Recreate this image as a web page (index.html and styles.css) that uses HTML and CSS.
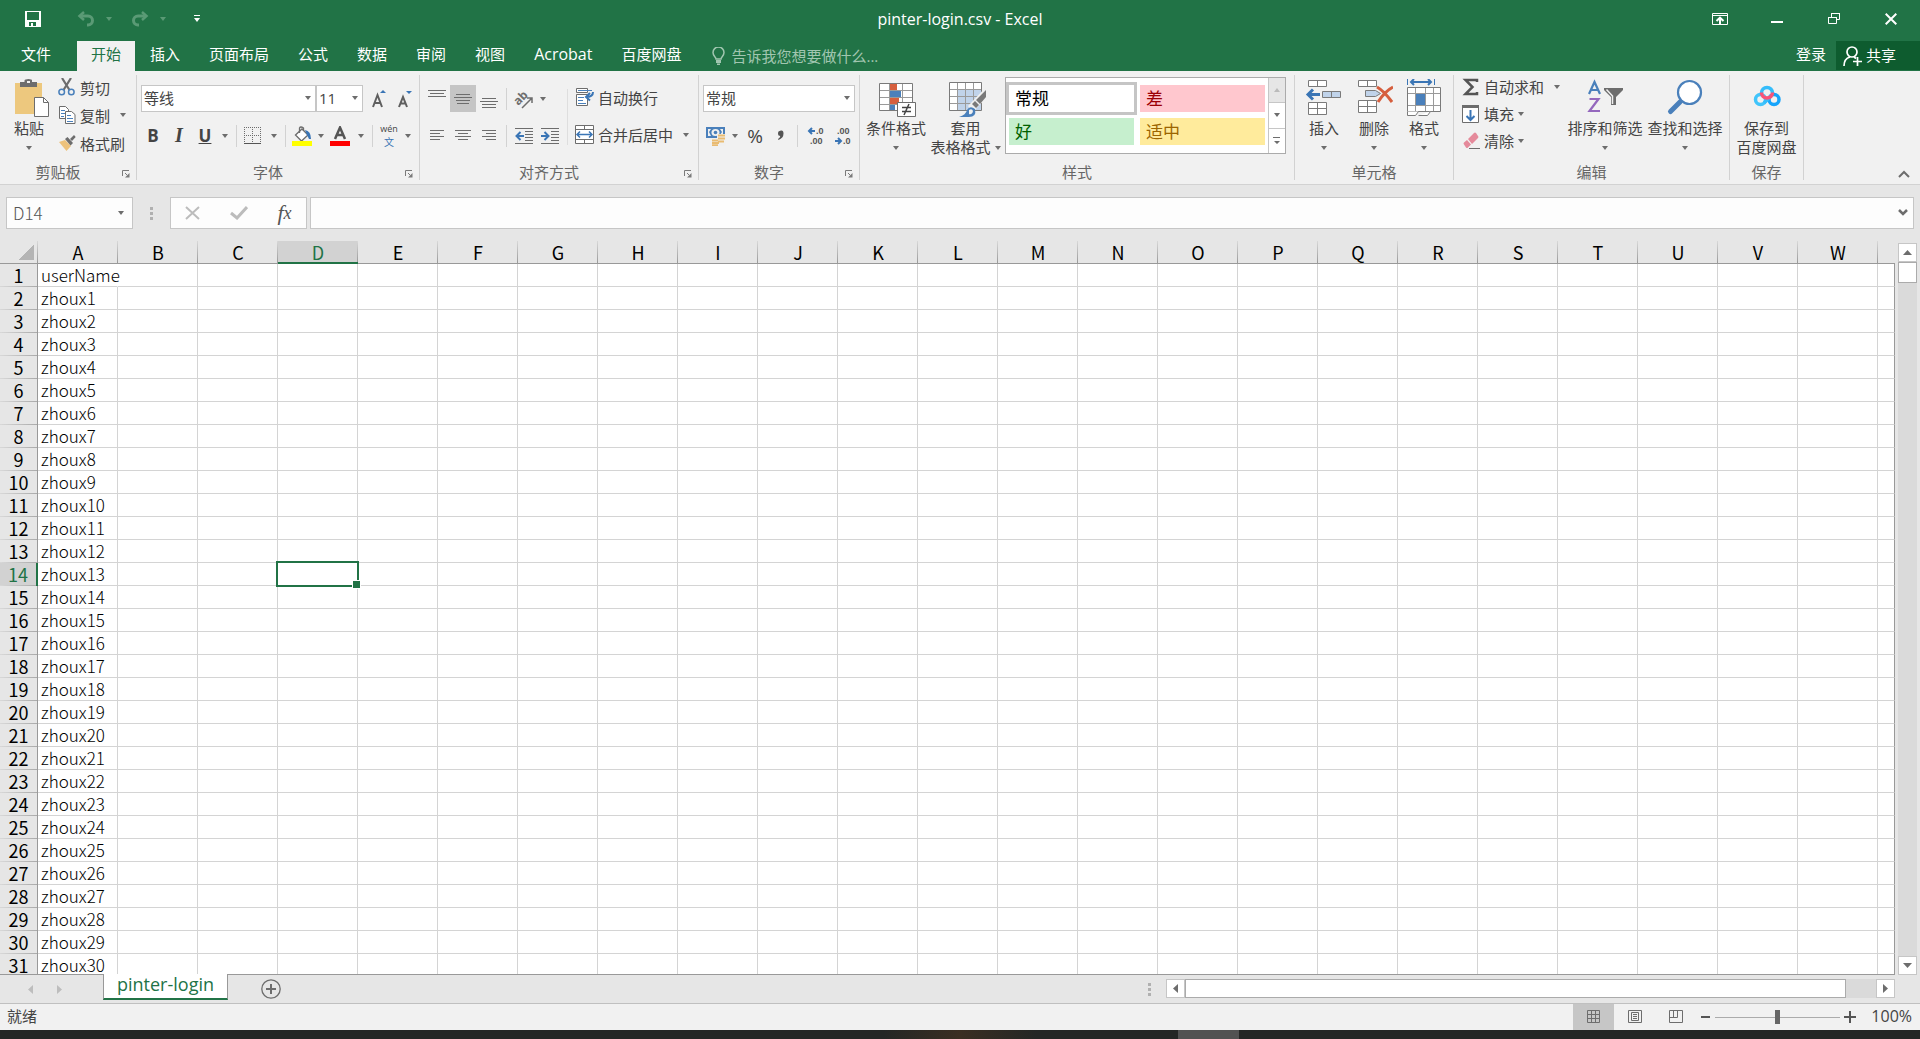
FILE: index.html
```html
<!DOCTYPE html>
<html lang="zh-CN">
<head>
    <meta charset="UTF-8">
    <meta name="viewport" content="width=device-width, initial-scale=1.0">
    <title>pinter-login.csv - Excel</title>
    <link rel="stylesheet" href="styles.css">
</head>
<body>
    <header class="titlebar">
        <div class="quick-access">
            <button class="qa-save" aria-label="保存">
                <svg width="16" height="16" viewBox="0 0 16 16"><path fill="#fff" fill-rule="evenodd" d="M0 0h16v16H0zM2 1v8h12V1zM4 11v4h2v-3h2v3h3v-4z"/></svg>
            </button>
            <button class="qa-step" aria-label="撤消">
                <svg width="18" height="16" viewBox="0 0 18 16"><path fill="none" stroke="#5a9a75" stroke-width="3" d="M3 5h8a4.500 4.500 0 0 1 0 9h-1"/><path fill="none" stroke="#5a9a75" stroke-width="2.500" d="M7 1 2.500 5 7 9"/></svg>
                <span class="caret"></span>
            </button>
            <button class="qa-step" aria-label="恢复">
                <svg width="18" height="16" viewBox="0 0 18 16"><path fill="none" stroke="#5a9a75" stroke-width="3" d="M15 5H7a4.500 4.500 0 0 0 0 9h1"/><path fill="none" stroke="#5a9a75" stroke-width="2.500" d="M11 1l4.500 4L11 9"/></svg>
                <span class="caret"></span>
            </button>
            <button class="qa-more" aria-label="自定义快速访问工具栏">
                <svg width="6" height="8" viewBox="0 0 6 8"><path fill="#fff" d="M0 0h6v1H0zM0 3h6L3 7z"/></svg>
            </button>
        </div>
        <h1 class="doc-title">pinter-login.csv - Excel</h1>
        <div class="window-controls">
            <button aria-label="功能区显示选项">
                <svg width="16" height="12" viewBox="0 0 16 12"><path fill="none" stroke="#fff" d="M.5.500h15v11H.5zM0 2.500h16"/><path fill="none" stroke="#fff" stroke-width="2" d="M8 11V5M4.500 8 8 4.700 11.500 8"/></svg>
            </button>
            <button aria-label="最小化">
                <svg width="12" height="12" viewBox="0 0 12 12"><path fill="#fff" d="M0 8h12v2H0z"/></svg>
            </button>
            <button aria-label="向下还原">
                <svg width="12" height="14" viewBox="0 0 12 14"><path fill="none" stroke="#fff" d="M.5 5.500h8v6h-8zM3.500 5V1.500h8v6H9"/><path fill="#fff" d="M0 5h9v1H0zM3 1h9v1H3z"/></svg>
            </button>
            <button aria-label="关闭">
                <svg width="12" height="12" viewBox="0 0 12 12"><path stroke="#fff" stroke-width="2" d="M.7.700l10.600 10.600M11.300.700.700 11.300"/></svg>
            </button>
        </div>
    </header>

    <nav class="tabs">
        <a href="#file" class="file">文件</a>
        <a href="#home" class="active">开始</a>
        <a href="#insert">插入</a>
        <a href="#layout">页面布局</a>
        <a href="#formulas">公式</a>
        <a href="#data">数据</a>
        <a href="#review">审阅</a>
        <a href="#view">视图</a>
        <a href="#acrobat" class="latin">Acrobat</a>
        <a href="#netdisk">百度网盘</a>
        <label class="tell-me">
            <svg width="13" height="18" viewBox="0 0 13 18"><path fill="none" stroke="#a1c6b0" stroke-width="1.500" d="M4 12c0-2-3-3-3-6.500a5.400 5.400 0 0 1 11 0C12 9 9 10 9 12z"/><path fill="#a1c6b0" d="M4 13h5v3H4zM5 16.500h3V18H5z"/></svg>
            <input type="text" placeholder="告诉我您想要做什么...">
        </label>
        <a href="#signin" class="signin">登录</a>
        <button class="share">
            <svg width="19" height="20" viewBox="0 0 19 20"><g fill="none" stroke="#fff" stroke-width="1.700"><circle cx="9" cy="6" r="5"/><path d="M1 20c0-5 2.500-8 6-9M11 11l2 1.500M14.500 11v9M10 15.500h9"/></g></svg>
            共享
        </button>
    </nav>

    <section class="ribbon">
        <div class="group clipboard">
            <div class="group-body">
                <button class="big paste">
                    <svg width="40" height="40" viewBox="0 0 40 40"><path fill="#edc87e" d="M6 4h27v31H6z"/><path fill="#6d6d6d" d="M11 3h4.500V1.500Q16 0 19.500 0T23 1.500V3h5v5H11z"/><path fill="#f0f0f0" d="M18 2h3v2h-3z"/><path fill="#fff" stroke="#6d6d6d" d="M25.500 18.500h9l5 5v14h-14z"/><path fill="none" stroke="#6d6d6d" d="M34.500 18.500v5h5"/></svg>
                    粘贴
                    <span class="caret"></span>
                </button>
                <div class="stack clip-stack">
                    <button class="small">
                        <svg width="18" height="18" viewBox="0 0 18 18"><path fill="none" stroke="#6d6d6d" stroke-width="2.200" d="M4 0l7.500 12M13 0 5.500 12"/><g fill="none" stroke="#4a80bb" stroke-width="1.500"><circle cx="3.700" cy="14" r="2.800"/><circle cx="13.300" cy="14" r="2.800"/></g></svg>
                        剪切
                    </button>
                    <button class="small">
                        <svg width="18" height="18" viewBox="0 0 18 18"><path fill="#fff" stroke="#6d6d6d" d="M1.500.500h6l3 3v9h-9z"/><path stroke="#4a80bb" d="M3 4.500h4M3 7.500h4M3 10.500h3"/><path fill="#fff" stroke="#6d6d6d" d="M7.500 5.500h6l3.500 3v9H7.500z"/><path stroke="#4a80bb" d="M9 9.500h4M9 12.500h6M9 15.500h6"/></svg>
                        复制
                        <span class="caret far"></span>
                    </button>
                    <button class="small">
                        <svg width="18" height="18" viewBox="0 0 18 18"><path fill="#edc27c" d="M1 8l6-2 6 6-4.500 5z"/><path fill="#6d6d6d" d="M7 5l2.500-2L15 9l-2.500 2.500zM12 5l4-4 1.700 2-3.700 4z"/></svg>
                        格式刷
                    </button>
                </div>
            </div>
            <div class="group-foot"><span>剪贴板</span><button class="launcher" aria-label="剪贴板选项"><svg width="8" height="8" viewBox="0 0 8 8"><path fill="none" stroke="#7a7a7a" d="M.5 6V.500H7M3 3l2.500 2.500"/><path fill="#7a7a7a" d="M7.500 3v4.500H3z"/></svg></button></div>
        </div>

        <div class="group font">
            <div class="group-body rows">
                <div class="row">
                    <span class="combo font-name"><select aria-label="字体"><option>等线</option></select></span>
                    <span class="combo font-size"><select aria-label="字号"><option>11</option></select></span>
                    <button class="tool grow" aria-label="增大字号"><svg width="18" height="18" viewBox="0 0 18 18"><path fill="none" stroke="#5f5f5f" stroke-width="2" d="M2 17 6.500 5 11 17M3.500 13h6"/><path fill="#3a75b5" d="M9 3h6l-3-3z"/></svg></button>
                    <button class="tool" aria-label="减小字号"><svg width="18" height="18" viewBox="0 0 18 18"><path fill="none" stroke="#5f5f5f" stroke-width="2" d="M2 17 6 7l4 10M3.500 13.500h5"/><path fill="#3a75b5" d="M9 1h6l-3 3z"/></svg></button>
                </div>
                <div class="row">
                    <button class="tool narrow bold">B</button>
                    <button class="tool wide italic">I</button>
                    <button class="tool narrow underline">U</button>
                    <button class="drop wide-drop" aria-label="下划线选项"><span class="caret"></span></button>
                    <span class="sep"></span>
                    <button class="tool" aria-label="边框"><svg width="18" height="18" viewBox="0 0 18 18"><path fill="none" stroke="#6d6d6d" stroke-dasharray="1 1" d="M0 .5h17M.5 0v16M8.500 0v16M16.500 0v16M0 8.500h17"/><path stroke="#555" d="M0 16.500h17"/></svg></button>
                    <button class="drop wide-drop" aria-label="边框选项"><span class="caret"></span></button>
                    <span class="sep"></span>
                    <button class="tool" aria-label="填充颜色"><svg width="20" height="20" viewBox="0 0 20 20"><path fill="#fff" stroke="#6d6d6d" stroke-width="1.300" d="M3.500 9 10 3l6 6-6.500 6z"/><path fill="none" stroke="#6d6d6d" stroke-width="1.300" d="M7.500 7V2q1-2 4 0v3"/><path fill="#3a75b5" d="M13 4q6 1 6 9h-2l-2-4z"/><path fill="#ff0" d="M0 15h20v5H0z"/></svg></button>
                    <button class="drop" aria-label="填充颜色选项"><span class="caret"></span></button>
                    <button class="tool" aria-label="字体颜色"><svg width="20" height="20" viewBox="0 0 20 20"><path fill="none" stroke="#555" stroke-width="2.500" d="M5 13 10 1.500 15 13M6.500 9h7"/><path fill="red" d="M0 15h20v5H0z"/></svg></button>
                    <button class="drop wide-drop" aria-label="字体颜色选项"><span class="caret"></span></button>
                    <span class="sep"></span>
                    <button class="tool pinyin" aria-label="拼音"><span>wén</span><span class="hanzi">文</span></button>
                    <button class="drop" aria-label="拼音选项"><span class="caret"></span></button>
                </div>
            </div>
            <div class="group-foot"><span>字体</span><button class="launcher" aria-label="字体设置"><svg width="8" height="8" viewBox="0 0 8 8"><path fill="none" stroke="#7a7a7a" d="M.5 6V.500H7M3 3l2.500 2.500"/><path fill="#7a7a7a" d="M7.500 3v4.500H3z"/></svg></button></div>
        </div>

        <div class="group align">
            <div class="group-body">
                <div class="rows">
                    <div class="row">
                        <button class="tool" aria-label="顶端对齐"><svg width="18" height="20" viewBox="0 0 18 20"><path stroke="#6d6d6d" d="M0 1.500h18M2 4.500h14M0 7.500h18"/></svg></button>
                        <button class="tool on" aria-label="垂直居中"><svg width="18" height="20" viewBox="0 0 18 20"><path stroke="#6d6d6d" d="M2 5.500h14M0 8.500h18M2 11.500h14M0 8.500h18M3 14.500h12"/></svg></button>
                        <button class="tool" aria-label="底端对齐"><svg width="18" height="20" viewBox="0 0 18 20"><path stroke="#6d6d6d" d="M2 9.500h14M0 12.500h18M2 15.500h14M2 18.500h14"/></svg></button>
                        <span class="sep four"></span>
                        <button class="tool" aria-label="方向"><svg width="24" height="24" viewBox="0 0 24 24"><text class="icon-ab" x="2" y="15" transform="rotate(-45 9 12)">ab</text><path fill="none" stroke="#6d6d6d" stroke-width="1.500" d="M10 21 20 11M15 11h5v5"/></svg></button>
                        <button class="drop" aria-label="方向选项"><span class="caret"></span></button>
                    </div>
                    <div class="row">
                        <button class="tool" aria-label="左对齐"><svg width="18" height="12" viewBox="0 0 18 12"><path stroke="#6d6d6d" d="M2 .5h14M2 3.500h10M2 6.500h14M2 9.500h10"/></svg></button>
                        <button class="tool" aria-label="居中"><svg width="18" height="12" viewBox="0 0 18 12"><path stroke="#6d6d6d" d="M1 .5h16M4 3.500h10M1 6.500h16M4 9.500h10"/></svg></button>
                        <button class="tool" aria-label="右对齐"><svg width="18" height="12" viewBox="0 0 18 12"><path stroke="#6d6d6d" d="M2 .5h14M6 3.500h10M2 6.500h14M6 9.500h10"/></svg></button>
                        <span class="sep four"></span>
                        <button class="tool" aria-label="减少缩进量"><svg width="18" height="16" viewBox="0 0 18 16"><path stroke="#6d6d6d" d="M0 .5h18M10 3.500h8M10 6.500h8M10 9.500h8M10 12.500h8M0 15.500h18"/><path fill="none" stroke="#3a75b5" stroke-width="2" d="M9 8H2M5.500 4 1.500 8l4 4"/></svg></button>
                        <button class="tool" aria-label="增加缩进量"><svg width="18" height="16" viewBox="0 0 18 16"><path stroke="#6d6d6d" d="M0 .5h18M10 3.500h8M10 6.500h8M10 9.500h8M10 12.500h8M0 15.500h18"/><path fill="none" stroke="#3a75b5" stroke-width="2" d="M0 8h7M3.500 4l4 4-4 4"/></svg></button>
                    </div>
                </div>
                <span class="sep four tall"></span>
                <div class="rows">
                    <button class="small">
                        <svg width="20" height="19" viewBox="0 0 20 19"><path fill="#fff" stroke="#6d6d6d" d="M2.500.500h11v4h-11zM2.500 6.500h11v11h-11z"/><path fill="none" stroke="#4a80bb" d="M4 2.500h14M4 9.500h6M4 12.500h5M4 15.500h8"/><path fill="none" stroke="#3a75b5" stroke-width="2" d="M19 4q0 5-7 5M16 5l-4 4 4 3.500"/></svg>
                        自动换行
                    </button>
                    <button class="small">
                        <svg width="20" height="19" viewBox="0 0 20 19"><path fill="#fff" stroke="#6d6d6d" d="M1.500.500h18v18h-18zM1.500 4.500h18M1.500 14.500h18M10.500 0v5M10.500 14v5"/><path fill="none" stroke="#3a75b5" stroke-width="1.500" d="M3 9.500h15M6 6.500l-3 3 3 3M15 6.500l3 3-3 3"/></svg>
                        合并后居中
                        <span class="caret far"></span>
                    </button>
                </div>
            </div>
            <div class="group-foot"><span>对齐方式</span><button class="launcher" aria-label="对齐设置"><svg width="8" height="8" viewBox="0 0 8 8"><path fill="none" stroke="#7a7a7a" d="M.5 6V.500H7M3 3l2.500 2.500"/><path fill="#7a7a7a" d="M7.500 3v4.500H3z"/></svg></button></div>
        </div>

        <div class="group number">
            <div class="group-body rows">
                <div class="row">
                    <span class="combo number-format"><select aria-label="数字格式"><option>常规</option></select></span>
                </div>
                <div class="row">
                    <button class="tool" aria-label="会计数字格式"><svg width="20" height="20" viewBox="0 0 20 20"><path fill="#4a80bb" d="M0 1h19v11H0z"/><path fill="#f0f0f0" d="M2 3h3l-2 3 2 4H2zM17 3h-3l2 3-2 3h3z"/><ellipse cx="9.500" cy="6.500" rx="4" ry="3.500" fill="#f0f0f0"/><circle cx="9.500" cy="6.500" r="1.800" fill="#4a80bb"/><path fill="#f0f0f0" d="M11 8h9v12H11zM6 12h8v8H6z"/><g fill="none" stroke="#e9bb71" stroke-width="2"><path d="M12 9.500h7M12 12.500h7M12 15.500h6M6 14.500h6M6 17h7M6 19.300h6"/></g></svg></button>
                    <button class="drop" aria-label="会计格式选项"><span class="caret"></span></button>
                    <button class="tool wide percent">%</button>
                    <button class="tool narrow comma" aria-label="千位分隔样式"><svg width="8" height="12" viewBox="0 0 8 12"><path fill="#555" d="M1.500 1.500q5-2.500 5 2 0 4.500-5 6.500l-.5-1q2-1 2.300-3Q1 6 1 4 1 2 1.500 1.500z"/></svg></button>
                    <span class="sep four"></span>
                    <button class="tool wide" aria-label="增加小数位数"><svg width="22" height="26" viewBox="0 0 22 26"><text class="icon-dec" x="11" y="11">.0</text><text class="icon-dec" x="5" y="21">.00</text><path fill="none" stroke="#3a75b5" stroke-width="2" d="M10 8H4M7 5 4 8l3 3"/></svg></button>
                    <button class="tool" aria-label="减少小数位数"><svg width="22" height="26" viewBox="0 0 22 26"><text class="icon-dec" x="5" y="11">.00</text><text class="icon-dec" x="11" y="21">.0</text><path fill="none" stroke="#3a75b5" stroke-width="2" d="M3 18h6M6 15l3 3-3 3"/></svg></button>
                </div>
            </div>
            <div class="group-foot"><span>数字</span><button class="launcher" aria-label="数字格式设置"><svg width="8" height="8" viewBox="0 0 8 8"><path fill="none" stroke="#7a7a7a" d="M.5 6V.500H7M3 3l2.500 2.500"/><path fill="#7a7a7a" d="M7.500 3v4.500H3z"/></svg></button></div>
        </div>

        <div class="group styles">
            <div class="group-body">
                <button class="big cond">
                    <svg width="40" height="40" viewBox="0 0 40 40"><path fill="#fff" stroke="#7a7a7a" d="M3.500 4.500h33v27h-33z"/><path stroke="#9a9a9a" d="M4 11.500h32M4 18.500h32M4 25.500h32M13.500 5v26M26.500 5v26"/><path fill="#d65f3e" d="M14 5h7v6h-7zM14 19h9v6h-9z"/><path fill="#4a80bb" d="M14 12h11v6H14zM14 26h5v5h-5z"/><path fill="#fff" stroke="#6d6d6d" d="M21.500 23.500h18v14h-18z"/><path stroke="#444" stroke-width="1.500" d="M26 28.500h9M26 32.500h9M33 25l-5 11"/></svg>
                    条件格式
                    <span class="caret"></span>
                </button>
                <button class="big table-fmt">
                    <svg width="40" height="40" viewBox="0 0 40 40"><path fill="#fff" stroke="#7a7a7a" d="M3.500 3.500h32v28h-32z"/><path fill="#c0d3ea" d="M12 11h23v20H12z"/><path stroke="#9a9a9a" d="M4 10.500h31M4 17.500h31M4 24.500h31M11.500 4v27M19.500 4v27M27.500 4v27"/><path fill="#f0f0f0" d="M40 8 22 27l5 6 13-14z"/><path fill="#7a7a7a" d="M40 11v7l-6 7-4-4zM29 22l4 4-3 3-4-4z"/><path fill="#4a80bb" d="M13 38q7-2 8-7 3-5 8-1 2 9-8 8z"/><path fill="#f0f0f0" d="M23 31q3-2 4 1-1 4-4 3z"/></svg>
                    套用
                    <span class="line">表格格式 <span class="caret"></span></span>
                </button>
                <div class="gallery">
                    <div class="swatches">
                        <button class="swatch normal">常规</button>
                        <button class="swatch bad">差</button>
                        <button class="swatch good">好</button>
                        <button class="swatch neutral">适中</button>
                    </div>
                    <div class="gallery-scroll">
                        <button class="off" aria-label="上一行"><span class="caret up"></span></button>
                        <button aria-label="下一行"><span class="caret"></span></button>
                        <button aria-label="其他样式"><svg width="8" height="8" viewBox="0 0 8 8"><path fill="#6d6d6d" d="M0 0h7v1H0zM1 4h6L4 7z"/></svg></button>
                    </div>
                </div>
            </div>
            <div class="group-foot"><span>样式</span></div>
        </div>

        <div class="group cells">
            <div class="group-body">
                <button class="big">
                    <svg width="38" height="40" viewBox="0 0 38 40"><g fill="#fff" stroke="#7a7a7a"><path d="M3.500 1.500h18v6h-18zM12.500 1v7M3.500 23.500h18v12h-18zM3.500 29.500h18M12.500 23v13"/><path fill="#c0d3ea" d="M17.500 12.500h18v6h-18zM26.500 12v7"/></g><path fill="none" stroke="#3a75b5" stroke-width="3" d="M15 15.500H3M8 10.500l-5 5 5 5"/></svg>
                    插入
                    <span class="caret"></span>
                </button>
                <button class="big">
                    <svg width="38" height="40" viewBox="0 0 38 40"><g fill="#fff" stroke="#7a7a7a"><path d="M3.500 1.500h18v6h-18zM12.500 1v7M3.500 21.500h18v12h-18zM3.500 27.500h18M12.500 21v13"/><path fill="#c0d3ea" d="M10.500 11.500h10l5 3-5 3h-10z"/></g><path fill="none" stroke="#d65f3e" stroke-width="3" d="M22 8q7 4 15 15M38 8q-8 4-15 15"/></svg>
                    删除
                    <span class="caret"></span>
                </button>
                <button class="big">
                    <svg width="38" height="40" viewBox="0 0 38 40"><path fill="#fff" stroke="#7a7a7a" d="M2.500 8.500h33v24h-33z"/><path fill="none" stroke="#9a9a9a" d="M3 14.500h32M3 26.500h32M10.500 9v23M20.500 9v23M28.500 9v23"/><path fill="#4a80bb" d="M11 15h9v11h-9z"/><path fill="#fff" stroke="#7a7a7a" d="M2.500 32.500v4h8l3-4M13.500 36.500h9l3-4"/><path fill="none" stroke="#3a75b5" d="M2.500 0v6M29.500 0v6"/><path fill="none" stroke="#3a75b5" stroke-width="2" d="M6 3h20M9 0 6 3l3 3M23 0l3 3-3 3"/></svg>
                    格式
                    <span class="caret"></span>
                </button>
            </div>
            <div class="group-foot"><span>单元格</span></div>
        </div>

        <div class="group editing">
            <div class="group-body">
                <div class="stack edit-stack">
                    <button class="small">
                        <svg width="18" height="18" viewBox="0 0 18 18"><path fill="none" stroke="#555" stroke-width="2.500" d="M15 4V2H3.500l7 7-7 7H15v-2"/></svg>
                        自动求和
                        <span class="caret far"></span>
                    </button>
                    <button class="small">
                        <svg width="18" height="18" viewBox="0 0 18 18"><path fill="#fff" stroke="#6d6d6d" d="M.5.500h16v17H.5z"/><path fill="#6d6d6d" d="M0 0h17v3H0z"/><path fill="none" stroke="#3a75b5" stroke-width="2" d="M8.500 5v10M4.500 11l4 4 4-4"/></svg>
                        填充
                        <span class="caret"></span>
                    </button>
                    <button class="small">
                        <svg width="18" height="18" viewBox="0 0 18 18"><path fill="#e58a9b" d="M6 7l6-6q1-1 2 0l2 3q1 1 0 2l-6 6zM5 8l4 4.500-3 3q-1 1-2 0l-2-3q-1-1 0-2z"/><path stroke="#6d6d6d" d="M7 16.500h11"/></svg>
                        清除
                        <span class="caret"></span>
                    </button>
                </div>
                <button class="big broad">
                    <svg width="38" height="40" viewBox="0 0 38 40"><path fill="none" stroke="#4a80bb" stroke-width="2.200" d="M3 15 8.500 3 14 15M5 11h7"/><path fill="none" stroke="#9468bd" stroke-width="2.200" d="M3.500 20h9l-9 12H14"/><path fill="#6d6d6d" d="M18 9h19v2l-7 7v8h-5v-8l-7-7z"/><path fill="none" stroke="#f0f0f0" stroke-width="1.500" d="M20.500 10.500l6 6.500v8"/></svg>
                    排序和筛选
                    <span class="caret"></span>
                </button>
                <button class="big broad">
                    <svg width="38" height="40" viewBox="0 0 38 40"><circle cx="23.500" cy="13.500" r="11.500" fill="#fff" stroke="#4a80bb" stroke-width="2.200"/><path stroke="#4a80bb" stroke-width="5" stroke-linecap="round" d="M14 23 4.500 32.500"/></svg>
                    查找和选择
                    <span class="caret"></span>
                </button>
            </div>
            <div class="group-foot"><span>编辑</span></div>
        </div>

        <div class="group save">
            <div class="group-body">
                <button class="big">
                    <svg width="28" height="40" viewBox="0 0 28 40"><g fill="none" stroke-width="3.500"><circle cx="7.500" cy="20.500" r="5" stroke="#41c5fb"/><circle cx="21" cy="20.500" r="5" stroke="#16a4fb"/><path stroke="#35bdfb" d="M11 24l7-7M8.500 14a5.500 5.500 0 1 1 11 0"/><path stroke="#fb5377" d="M8.500 13.500a5.500 5.500 0 0 0 11 0"/></g></svg>
                    保存到
                    <span class="line">百度网盘</span>
                </button>
            </div>
            <div class="group-foot"><span>保存</span></div>
        </div>

        <button class="collapse" aria-label="折叠功能区"><svg width="12" height="8" viewBox="0 0 12 8"><path fill="none" stroke="#6d6d6d" stroke-width="2" d="M1 7l5-5 5 5"/></svg></button>
    </section>

    <section class="formula-bar">
        <label class="name-box"><input type="text" value="D14" aria-label="名称框"><span class="caret"></span></label>
        <span class="grip"></span>
        <div class="formula-buttons">
            <button aria-label="取消"><svg width="16" height="14" viewBox="0 0 16 14"><path stroke="#bcbcbc" stroke-width="2" d="M1 1l13 12M14 1 1 13"/></svg></button>
            <button aria-label="输入"><svg width="18" height="14" viewBox="0 0 18 14"><path fill="none" stroke="#bcbcbc" stroke-width="3" d="M1 7l6 5L17 1"/></svg></button>
            <button class="fx" aria-label="插入函数"><i>f</i><i class="x">x</i></button>
        </div>
        <label class="formula-input"><input type="text" aria-label="编辑栏"><svg width="10" height="8" viewBox="0 0 10 8"><path fill="none" stroke="#6d6d6d" stroke-width="2.500" d="M1 1l4 4 4-4"/></svg></label>
    </section>

    <main class="workspace">
        <div class="sheet">
            <table id="grid">
                <thead></thead>
                <tbody></tbody>
            </table>
        </div>
        <div class="vscroll">
            <button aria-label="向上滚动"><svg width="9" height="5" viewBox="0 0 9 5"><path fill="#6d6d6d" d="M0 5h9L4.500 0z"/></svg></button>
            <div class="track"><div class="thumb"></div></div>
            <button aria-label="向下滚动"><svg width="9" height="5" viewBox="0 0 9 5"><path fill="#6d6d6d" d="M0 0h9L4.500 5z"/></svg></button>
        </div>
    </main>

    <footer class="sheet-bar">
        <div class="sheet-nav">
            <button aria-label="上一个工作表"><svg width="5" height="9" viewBox="0 0 5 9"><path fill="#bdbdbd" d="M5 0v9L0 4.500z"/></svg></button>
            <button aria-label="下一个工作表"><svg width="5" height="9" viewBox="0 0 5 9"><path fill="#bdbdbd" d="M0 0v9l5-4.500z"/></svg></button>
        </div>
        <button class="sheet-tab">pinter-login</button>
        <button class="add-sheet" aria-label="新工作表"><svg width="20" height="20" viewBox="0 0 20 20"><circle cx="10" cy="10" r="9.200" fill="none" stroke="#6d6d6d" stroke-width="1.300"/><path stroke="#6d6d6d" stroke-width="2" d="M5 10h10M10 5v10"/></svg></button>
        <span class="grip"></span>
        <div class="hscroll">
            <button aria-label="向左滚动"><svg width="5" height="9" viewBox="0 0 5 9"><path fill="#6d6d6d" d="M5 0v9L0 4.500z"/></svg></button>
            <div class="track"><div class="thumb"></div></div>
            <button aria-label="向右滚动"><svg width="5" height="9" viewBox="0 0 5 9"><path fill="#6d6d6d" d="M0 0v9l5-4.500z"/></svg></button>
        </div>
    </footer>

    <div class="status-bar">
        <span class="ready">就绪</span>
        <button class="view on" aria-label="普通"><svg width="14" height="14" viewBox="0 0 14 14"><path fill="none" stroke="#6d6d6d" d="M.5.500h12v12H.5zM4.500 0v13M8.500 0v13M0 4.500h13M0 8.500h13"/></svg></button>
        <button class="view" aria-label="页面布局"><svg width="14" height="14" viewBox="0 0 14 14"><path fill="none" stroke="#6d6d6d" d="M.5.500h13v12H.5zM3.500 2.500h7v8h-7zM5 4.500h4M5 6.500h4M5 8.500h4"/></svg></button>
        <button class="view" aria-label="分页预览"><svg width="14" height="14" viewBox="0 0 14 14"><path fill="none" stroke="#6d6d6d" d="M.5.500h13v12H.5zM.5 7.500h8V.500M4.500.500v7"/></svg></button>
        <button class="zoom-step" aria-label="缩小"><svg width="12" height="12" viewBox="0 0 12 12"><path fill="#555" d="M2 5h9v2H2z"/></svg></button>
        <input class="zoom" type="range" min="0" max="200" value="100" aria-label="缩放">
        <button class="zoom-step" aria-label="放大"><svg width="12" height="12" viewBox="0 0 12 12"><path fill="#555" d="M0 5h12v2H0zM5 0h2v12H5z"/></svg></button>
        <span class="zoom-value">100%</span>
    </div>
    <div class="taskbar"><span class="task"></span></div>

    <script>
        const letters = 'ABCDEFGHIJKLMNOPQRSTUVW'.split('');
        const rowCount = 31;
        const selected = { column: 'D', row: 14 };

        function addCell(row, tag, text, className) {
            const cell = document.createElement(tag);
            cell.textContent = text;
            if (className) {
                cell.className = className;
            }
            row.appendChild(cell);
        }

        // Column letters, with a narrow cut-off column at the end
        const headRow = document.querySelector('#grid thead').insertRow();
        addCell(headRow, 'th', '', 'corner');
        letters.forEach(letter => addCell(headRow, 'th', letter, letter === selected.column ? 'current' : ''));
        addCell(headRow, 'th', '', 'rest');

        const body = document.querySelector('#grid tbody');
        for (let i = 1; i <= rowCount; i++) {
            const row = body.insertRow();
            addCell(row, 'th', i, i === selected.row ? 'current' : '');
            letters.forEach(letter => {
                const text = letter !== 'A' ? '' : i === 1 ? 'userName' : 'zhoux' + (i - 1);
                let className = '';
                if (letter === selected.column && i === selected.row) className = 'selected';
                if (letter === 'A' && i === 1) className = 'spill';
                addCell(row, 'td', text, className);
            });
            addCell(row, 'td', '', 'rest');
        }
    </script>
</body>
</html>
```
FILE: styles.css
```css
* {
    box-sizing: border-box;
}
body, html {
    height: 100%;
    margin: 0;
}
body {
    display: flex;
    flex-direction: column;
    overflow: hidden;
    background-color: #e6e6e6;
    color: #444;
    font-family: "Open Sans", "Noto Sans CJK SC", sans-serif;
    font-size: 15px;
}
button, input, select {
    margin: 0;
    padding: 0;
    border: none;
    border-radius: 0;
    background: none;
    color: inherit;
    font: inherit;
    outline: none;
}
button {
    display: flex;
    align-items: center;
    justify-content: center;
    white-space: nowrap;
}
svg {
    display: block;
    flex-shrink: 0;
}
a {
    color: inherit;
    text-decoration: none;
}
.caret {
    display: inline-block;
    flex-shrink: 0;
    border: 3px solid transparent;
    border-top: 4px solid #6d6d6d;
    border-bottom: none;
}
.caret.up {
    border-top: none;
    border-bottom: 4px solid #bbb;
}

/* Title bar */
.titlebar {
    display: grid;
    grid-template-columns: 1fr auto 1fr;
    align-items: center;
    height: 41px;
    padding-bottom: 3px;
    background-color: #217346;
    color: #fff;
}
.quick-access {
    display: flex;
    align-items: center;
    padding-left: 25px;
}
.qa-step {
    gap: 11px;
    margin-right: 19px;
}
.qa-save {
    margin-right: 36px;
}
.qa-step .caret {
    border-top-color: #5a9a75;
}
.qa-more {
    margin-left: 9px;
}
.doc-title {
    margin: 0;
    font-size: 16px;
    font-weight: normal;
}
.window-controls {
    display: flex;
    justify-content: flex-end;
    padding-right: 1px;
}
.window-controls button {
    width: 57px;
    height: 38px;
}

/* Ribbon tabs */
.tabs {
    display: flex;
    gap: 1px;
    height: 30px;
    background-color: #217346;
    color: #fff;
    line-height: 27px;
}
.tabs a {
    padding: 0 14px;
}
.tabs .file {
    padding: 0 25px 0 21px;
}
.tabs .latin {
    font-size: 16px;
}
.tabs .active {
    background-color: #f1f1f1;
    color: #217346;
}
.tell-me {
    display: flex;
    flex: 1;
    align-items: center;
    gap: 6px;
    padding-left: 16px;
}
.tell-me input {
    flex: 1;
}
.tell-me input::placeholder {
    color: #a1c6b0;
}
.tabs .signin {
    padding: 0 9px;
}
.share {
    gap: 4px;
    height: 29px;
    padding: 0 24px 0 7px;
    background-color: #0e5c2f;
    line-height: 27px;
}

/* Ribbon */
.ribbon {
    display: flex;
    height: 114px;
    padding: 4px 0;
    border-bottom: 1px solid #d2d2d2;
    background-color: #f1f1f1;
}
.group {
    display: flex;
    flex: none;
    flex-direction: column;
    border-right: 1px solid #d2d2d2;
}
.clipboard { width: 137px; }
.font { width: 283px; }
.align { width: 279px; }
.number { width: 161px; }
.styles { width: 435px; }
.cells { width: 159px; }
.editing { width: 276px; }
.save { width: 74px; }

.group-body {
    display: flex;
    flex: 1;
    padding: 0 4px;
}
.group-foot {
    display: flex;
    height: 16px;
    color: #666;
    line-height: 16px;
}
.group-foot span {
    flex: 1;
    text-align: center;
}
.launcher {
    width: 20px;
    padding-top: 4px;
}
.big {
    flex-direction: column;
    justify-content: flex-start;
    width: 50px;
    padding-top: 4px;
    line-height: 19px;
}
.big > .caret {
    margin-top: 8px;
}
.big .line {
    display: flex;
    align-items: center;
    gap: 4px;
}
.cond { width: 64px; }
.table-fmt { width: 75px; }
.broad { width: 80px; }
.save .big { width: 65px; }
.save .group-body {
    justify-content: center;
}
.small {
    justify-content: flex-start;
    gap: 4px;
    height: 27px;
    padding-bottom: 2px;
}
.small .far {
    margin-left: 6px;
}
.stack {
    display: flex;
    flex-direction: column;
}
.clip-stack {
    padding-left: 4px;
}
.stack .small {
    padding-bottom: 4px;
}
.clip-stack .small {
    height: 28px;
}
.edit-stack {
    width: 107px;
    padding-left: 4px;
}
.group .rows {
    display: flex;
    flex-direction: column;
    gap: 10px;
    padding-top: 10px;
}
.row {
    display: flex;
    height: 27px;
}
.row > * {
    flex: none;
}
.tool {
    width: 26px;
    height: 27px;
}
.tool.on {
    background-color: #c5c5c5;
}
.tool.narrow { width: 24px; }
.tool.wide { width: 28px; }
.tool.grow {
    margin-left: 4px;
}
.drop { width: 12px; }
.wide-drop { width: 16px; }
.sep {
    width: 1px;
    height: 22px;
    margin: 3px;
    background-color: #d2d2d2;
}
.sep.four {
    margin: 3px 4px;
}
.sep.tall {
    height: 56px;
    margin: 14px 6px 0 4px;
    background-color: #dedede;
}
.bold, .underline {
    font-size: 17px;
    font-weight: bold;
}
.underline {
    text-decoration: underline;
}
.italic {
    font-family: "Liberation Serif", serif;
    font-size: 20px;
    font-style: italic;
    font-weight: bold;
}
.percent {
    font-size: 19px;
}
.pinyin {
    flex-direction: column;
    font-size: 9px;
    line-height: 12px;
}
.pinyin .hanzi {
    color: #3a75b5;
    font-size: 10px;
    line-height: 14px;
}
.icon-ab {
    fill: #6d6d6d;
    font-size: 12px;
    font-weight: bold;
}
.icon-dec {
    fill: #555;
    font-family: "Liberation Sans", sans-serif;
    font-size: 9px;
    font-weight: bold;
}
.combo {
    position: relative;
    height: 27px;
    border: 1px solid #c6c6c6;
    background-color: #fff;
}
.combo select {
    width: 100%;
    height: 25px;
    padding: 0 0 2px 2px;
    appearance: none;
}
.combo::after {
    content: "";
    position: absolute;
    top: 10px;
    right: 4px;
    border: 3px solid transparent;
    border-top: 4px solid #6d6d6d;
    border-bottom: none;
    pointer-events: none;
}
.font-name { width: 175px; }
.font-size { width: 47px; }
.number-format { width: 152px; }

.gallery {
    display: flex;
    height: 77px;
    margin: 2px 0 0 2px;
    border: 1px solid #ababab;
    background-color: #fff;
}
.swatches {
    display: grid;
    grid-template-columns: 125px 125px;
    grid-auto-rows: 27px;
    gap: 6px;
    padding: 7px 3px;
}
.swatch {
    justify-content: flex-start;
    padding: 0 6px 2px;
    font-size: 17px;
}
.normal {
    box-shadow: 0 0 0 3px #c5c5c5;
    color: #000;
}
.bad {
    background-color: #ffc7ce;
    color: #9c0006;
}
.good {
    background-color: #c6efce;
    color: #006100;
}
.neutral {
    background-color: #ffeb9c;
    color: #9c6500;
}
.gallery-scroll {
    display: flex;
    flex-direction: column;
    width: 17px;
    border-left: 1px solid #c6c6c6;
}
.gallery-scroll button {
    flex: 1;
}
.gallery-scroll button + button {
    border-top: 1px solid #c6c6c6;
}
.gallery-scroll .off {
    background-color: #e6e6e6;
}
.collapse {
    align-self: flex-end;
    margin: 0 10px 2px auto;
}

/* Formula bar */
.formula-bar {
    display: flex;
    height: 56px;
    padding: 12px 6px;
    color: #555;
}
.name-box, .formula-buttons, .formula-input {
    display: flex;
    align-items: center;
    border: 1px solid #c6c6c6;
    background-color: #fdfdfd;
}
.name-box {
    width: 127px;
    padding: 0 8px 0 6px;
}
.name-box input {
    flex: 1;
    min-width: 0;
    padding-bottom: 2px;
    font-family: "Noto Sans CJK SC", sans-serif;
    font-size: 17px;
    font-weight: 300;
}
.grip {
    align-self: center;
    width: 3px;
    height: 13px;
    background: repeating-linear-gradient(#b0b0b0 0 3px, transparent 3px 5px);
}
.formula-bar .grip {
    margin: 0 17px;
}
.formula-buttons {
    justify-content: space-around;
    width: 137px;
    margin-right: 3px;
}
.fx {
    font-family: "Liberation Serif", serif;
    font-size: 22px;
}
.fx .x {
    font-size: 18px;
}
.formula-input {
    flex: 1;
    padding-right: 5px;
}
.formula-input input {
    flex: 1;
}

/* Grid */
.workspace {
    display: flex;
    flex: 1;
    min-height: 0;
}
.sheet {
    flex: 1;
    min-width: 0;
    overflow: hidden;
    border-bottom: 1px solid #999;
}
#grid {
    width: 100%;
    table-layout: fixed;
    border-collapse: separate;
    border-spacing: 0;
    color: #000;
    font-family: "Noto Sans CJK SC", sans-serif;
    font-size: 17px;
    font-weight: 300;
    line-height: 22px;
}
#grid th, #grid td {
    width: 80px;
    height: 23px;
    padding: 0;
    white-space: nowrap;
}
#grid th {
    font-size: 18px;
    font-weight: normal;
    line-height: 20px;
}
#grid thead th {
    border-bottom: 1px solid #999;
    background: linear-gradient(#d8d8d8, #999) right / 1px 100% no-repeat;
}
#grid .corner {
    width: 38px;
    background: linear-gradient(#d8d8d8, #999) right / 1px 100% no-repeat, linear-gradient(135deg, transparent 50%, #b4b4b4 50%) 19px 4px / 15px 15px no-repeat;
}
#grid tbody th {
    padding-bottom: 2px;
    border-right: 1px solid #999;
    background: linear-gradient(to right, #d8d8d8, #aaa) bottom / 100% 1px no-repeat;
}
#grid thead .current {
    border-bottom: 2px solid #217346;
    background-color: #d2d2d2;
    color: #217346;
}
#grid tbody .current {
    border-right: 2px solid #217346;
    background-color: #d2d2d2;
    color: #217346;
}
#grid td {
    padding-left: 3px;
    border-right: 1px solid #d4d4d4;
    border-bottom: 1px solid #d4d4d4;
    background-color: #fff;
}
#grid .rest {
    width: auto;
}
#grid thead .rest {
    background: none;
}
#grid td.rest {
    border-right-color: #999;
}
#grid .spill {
    position: relative;
    border-right-color: #fff;
}
#grid .selected {
    position: relative;
}
.selected::before {
    content: "";
    position: absolute;
    inset: -2px;
    border: 2px solid #217346;
}
.selected::after {
    content: "";
    position: absolute;
    right: -4px;
    bottom: -4px;
    width: 7px;
    height: 7px;
    border: 1px solid #fff;
    background-color: #217346;
}

/* Scroll bars */
.vscroll {
    display: flex;
    flex-direction: column;
    width: 25px;
    padding: 2px 3px 0;
}
.hscroll {
    display: flex;
    width: 729px;
    height: 19px;
    margin-top: 4px;
}
.vscroll button, .hscroll button {
    width: 19px;
    height: 19px;
    border: 1px solid #c6c6c6;
    background-color: #fff;
}
.track {
    flex: 1;
    background-color: #dadada;
}
.thumb {
    border: 1px solid #ababab;
    background-color: #fff;
}
.vscroll .thumb {
    height: 21px;
}
.hscroll .thumb {
    width: 95.600%;
    height: 100%;
}

/* Sheet tabs */
.sheet-bar {
    display: flex;
    height: 29px;
    padding-right: 25px;
    border-bottom: 1px solid #c0c0c0;
}
.sheet-nav {
    display: flex;
    gap: 24px;
    width: 103px;
    padding-left: 28px;
}
.sheet-tab {
    z-index: 1;
    width: 125px;
    height: 26px;
    margin-top: -1px;
    padding-bottom: 4px;
    border: 1px solid #999;
    border-top: none;
    border-bottom: 2px solid #217346;
    background-color: #fff;
    color: #217346;
    font-size: 18px;
    line-height: 20px;
}
.add-sheet {
    margin-left: 33px;
}
.sheet-bar .grip {
    margin: 0 15px 0 auto;
}

/* Status bar */
.status-bar {
    display: flex;
    align-items: center;
    height: 26px;
    padding-right: 8px;
    background-color: #f1f1f1;
    line-height: 22px;
}
.ready, .zoom-value {
    padding-bottom: 2px;
}
.ready {
    flex: 1;
    padding-left: 7px;
}
.view {
    width: 41px;
    height: 26px;
}
.view.on {
    background-color: #c6c6c6;
}
.zoom-step {
    height: 26px;
}
.view + .zoom-step {
    margin-left: 3px;
}
.zoom {
    width: 125px;
    height: 15px;
    margin: 0 4px;
    background: linear-gradient(#ababab, #ababab) center / 100% 1px no-repeat;
    appearance: none;
}
.zoom::-webkit-slider-thumb {
    width: 5px;
    height: 14px;
    background-color: #666;
    appearance: none;
}
.zoom-value {
    margin-left: 15px;
    font-size: 16px;
}
.taskbar {
    display: flex;
    height: 9px;
    background: linear-gradient(to right, transparent 46%, #3a2e22 50%, transparent 54%), #242625;
}
.task {
    width: 61px;
    margin-left: 1178px;
    background-color: #525252;
}
```
